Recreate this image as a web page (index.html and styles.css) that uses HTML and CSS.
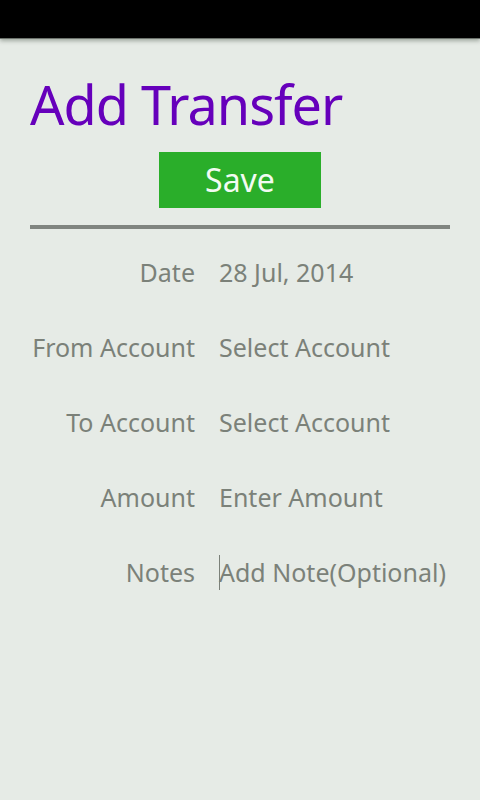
FILE: index.html
```html
<!DOCTYPE html>
<html>
<head>
<meta charset="utf-8">
<link rel="stylesheet" href="styles.css">
</head>
<body>
<div class="statusbar"></div>
<main class="page">
  <h1 class="title">Add Transfer</h1>
  <div class="actions"><button class="save">Save</button></div>
  <hr class="divider">
  <div class="form">
    <div class="label">Date</div><div class="value">28 Jul, 2014</div>
    <div class="label">From Account</div><div class="value">Select Account</div>
    <div class="label">To Account</div><div class="value">Select Account</div>
    <div class="label">Amount</div><div class="value">Enter Amount</div>
    <div class="label">Notes</div><div class="value note"><span class="cursor"></span>Add Note(Optional)</div>
  </div>
</main>
</body>
</html>
```
FILE: styles.css
```css
html, body {
  margin: 0;
  padding: 0;
  height: 100%;
  background: #e6ebe6;
  font-family: "Noto Sans", "Open Sans", sans-serif;
}
.statusbar {
  height: 38px;
  background: #000;
  box-shadow: 0 1px 0 #6d736d, 0 3px 4px rgba(80, 90, 80, 0.45);
  position: relative;
}
.page {
  padding: 0 30px;
}
.title {
  margin: 34px 0 0;
  font-weight: normal;
  font-size: 54px;
  line-height: 64px;
  letter-spacing: -1px;
  color: #6600bb;
}
.actions {
  display: flex;
  justify-content: center;
  margin-top: 16px;
}
.save {
  width: 162px;
  height: 56px;
  border: 0;
  padding: 0;
  background: #2aae2a;
  color: #f2fbf2;
  font-family: inherit;
  font-size: 32px;
  line-height: 56px;
}
.divider {
  margin: 17px 0 0;
  border: 0;
  height: 4px;
  background: #808580;
}
.form {
  display: grid;
  grid-template-columns: 165px 1fr;
  column-gap: 24px;
  row-gap: 39px;
  margin-top: 25px;
  font-size: 25px;
  line-height: 36px;
  color: #7b8179;
}
.label {
  text-align: right;
}
.value {
  white-space: nowrap;
}
.note {
  position: relative;
}
.cursor {
  position: absolute;
  left: 0;
  top: 1px;
  width: 1px;
  height: 35px;
  background: #7b8179;
}
```
